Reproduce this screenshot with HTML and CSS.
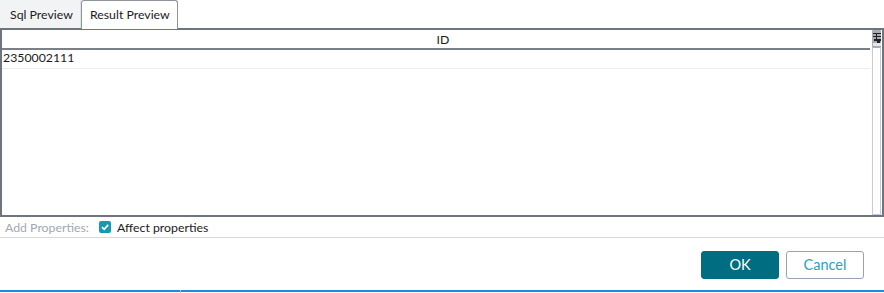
FILE: index.html
```html
<!DOCTYPE html>
<html>
<head>
<meta charset="utf-8">
<link rel="stylesheet" href="styles.css">
</head>
<body>
<div class="dialog">
  <div class="tabs">
    <div class="tab">Sql Preview</div>
    <div class="tab active">Result Preview</div>
  </div>
  <div class="grid">
    <div class="grid-main">
      <div class="header"><span>ID</span></div>
      <div class="row">2350002111</div>
    </div>
    <div class="vscroll">
      <div class="corner">
        <svg width="8" height="16" viewBox="0 0 8 16">
          <rect x="0" y="2" width="8" height="1" fill="#222"/>
          <rect x="0" y="5" width="8" height="1" fill="#222"/>
          <rect x="3" y="3" width="1" height="5" fill="#222"/>
          <rect x="1" y="8" width="7" height="2" fill="#222"/>
          <rect x="4" y="10" width="3" height="2" fill="#222"/>
          <rect x="0" y="12" width="8" height="3" fill="#e6e6e6"/>
        </svg>
      </div>
      <div class="track"></div>
    </div>
  </div>
  <div class="props">
    <span class="props-label">Add Properties:</span>
    <label class="check">
      <span class="box">
        <svg width="12" height="12" viewBox="0 0 12 12"><path d="M3 6.2 L5.2 8.3 L9.2 3.8" fill="none" stroke="#fff" stroke-width="1.8"/></svg>
      </span>
      Affect properties
    </label>
  </div>
  <div class="actions">
    <button class="btn ok">OK</button>
    <button class="btn cancel">Cancel</button>
  </div>
  <div class="footer"><span class="tick"></span></div>
</div>
</body>
</html>
```
FILE: styles.css
```css
* { box-sizing: border-box; }
html, body { margin: 0; padding: 0; background: #fff; }
body {
  font-family: Lato, "Open Sans", "Liberation Sans", sans-serif;
  font-size: 12.3px;
  color: #1b1b1b;
  width: 884px;
  height: 293px;
  overflow: hidden;
}
.dialog { display: flex; flex-direction: column; height: 293px; }
.tabs { display: flex; height: 28px; align-items: flex-end; position: relative; z-index: 1; }
.tab {
  height: 28px;
  width: 81px;
  padding-left: 10px;
  line-height: 30px;
  background: #f2f3f5;
  border-right: 1px solid #e1e3e6;
  color: #1b1b1b;
}
.tab.active {
  width: 97px;
  height: 29px;
  margin-bottom: -1px;
  padding-left: 8px;
  background: #fff;
  border: 1px solid #8d939b;
  border-bottom: none;
  border-radius: 3px 3px 0 0;
  line-height: 28px;
}
.grid {
  height: 189px;
  border: 2px solid #6f757c;
  display: flex;
}
.grid-main { flex: 1; display: flex; flex-direction: column; }
.header {
  height: 20px;
  border-bottom: 2px solid #7b8087;
  display: flex;
  align-items: center;
  justify-content: center;
  padding-left: 14px;
  padding-top: 1px;
  color: #1b1b1b;
}
.row {
  height: 19px;
  border-bottom: 1px solid #ececec;
  padding-left: 1px;
  line-height: 16px;
}
.vscroll {
  width: 12px;
  display: flex;
  flex-direction: column;
  padding-left: 2px;
  padding-right: 1px;
}
.corner {
  height: 18px;
  background: #a9adb3;
  display: flex;
  justify-content: center;
  align-items: center;
  border-radius: 1px;
}
.track {
  flex: 1;
  border: 1px solid #c6cadf;
  border-top: none;
  background: #fff;
}
.props {
  height: 21px;
  display: flex;
  align-items: center;
  padding-left: 5px;
  border-bottom: 1px solid #d6d8db;
}
.props-label { color: #a0a8b3; width: 94px; }
.check { display: flex; align-items: center; gap: 6px; color: #1b1b1b; }
.box {
  width: 12px;
  height: 12px;
  background: #1799b0;
  border-radius: 2px;
  display: flex;
}
.actions {
  height: 52px;
  display: flex;
  justify-content: flex-end;
  align-items: center;
  gap: 7px;
  padding-right: 20px;
  padding-top: 1px;
}
.btn {
  width: 78px;
  height: 28px;
  font-family: Lato, "Open Sans", "Liberation Sans", sans-serif;
  font-size: 14.5px;
  border-radius: 3px;
  cursor: pointer;
}
.ok { background: #006d80; color: #fff; border: 1px solid #006d80; }
.cancel { background: #fff; color: #2a9fc2; border: 1px solid #9aa2b1; }
.footer {
  height: 2px;
  background: #1e88e5;
  position: relative;
}
.tick {
  position: absolute;
  left: 180px;
  top: 0;
  width: 1px;
  height: 4px;
  background: #b8bec6;
}
```
